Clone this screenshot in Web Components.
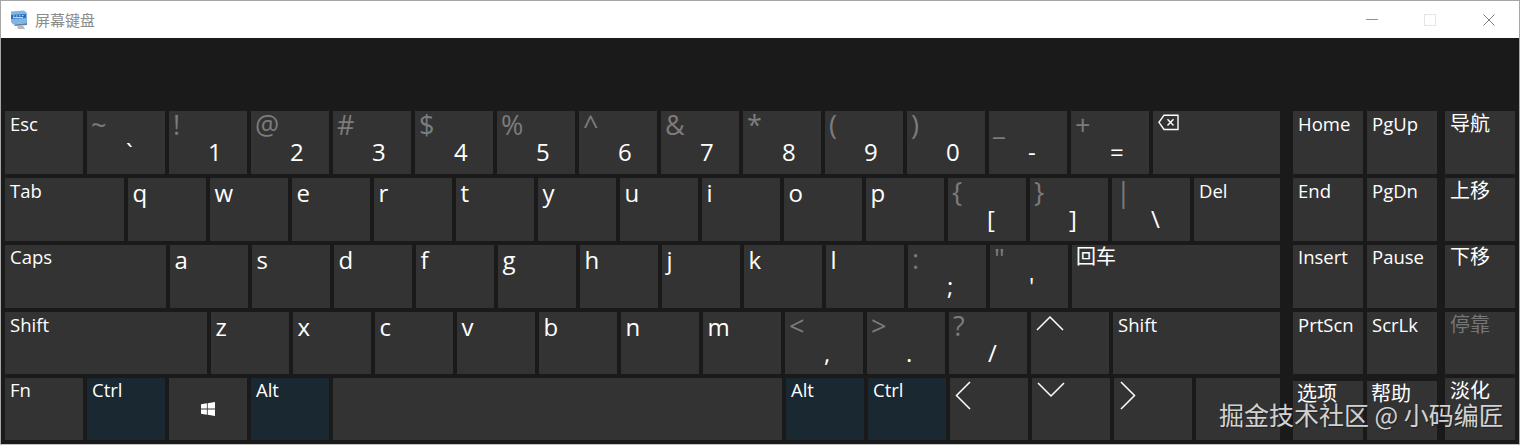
<!DOCTYPE html>
<html lang="zh">
<head>
<meta charset="utf-8">
<title>屏幕键盘</title>
<style>
html,body{margin:0;background:#1a1a1a;}
</style>
</head>
<body>

<osk-app>
  <osk-titlebar slot="title">屏幕键盘</osk-titlebar>

  <osk-block slot="main">
    <osk-row>
      <osk-key>Esc</osk-key>
      <osk-key pair><span slot="sub">~</span>`</osk-key>
      <osk-key pair><span slot="sub">!</span>1</osk-key>
      <osk-key pair><span slot="sub">@</span>2</osk-key>
      <osk-key pair><span slot="sub">#</span>3</osk-key>
      <osk-key pair><span slot="sub">$</span>4</osk-key>
      <osk-key pair><span slot="sub">%</span>5</osk-key>
      <osk-key pair><span slot="sub">^</span>6</osk-key>
      <osk-key pair><span slot="sub">&amp;</span>7</osk-key>
      <osk-key pair><span slot="sub">*</span>8</osk-key>
      <osk-key pair><span slot="sub">(</span>9</osk-key>
      <osk-key pair><span slot="sub">)</span>0</osk-key>
      <osk-key pair><span slot="sub">_</span>-</osk-key>
      <osk-key pair><span slot="sub">+</span>=</osk-key>
      <osk-key style="--w:127px">
        <svg width="21" height="17" viewBox="0 0 21 17" style="margin-top:2px" fill="none" stroke="#fff" stroke-width="1.4"><path d="M6 1.2H20V15.5H6L1 8.3Z"/><path d="M9.5 5.2l6 6.2M15.5 5.2l-6 6.2"/></svg>
      </osk-key>
    </osk-row>
    <osk-row>
      <osk-key style="--w:119px">Tab</osk-key>
      <osk-key letter>q</osk-key>
      <osk-key letter>w</osk-key>
      <osk-key letter>e</osk-key>
      <osk-key letter>r</osk-key>
      <osk-key letter>t</osk-key>
      <osk-key letter>y</osk-key>
      <osk-key letter>u</osk-key>
      <osk-key letter>i</osk-key>
      <osk-key letter>o</osk-key>
      <osk-key letter>p</osk-key>
      <osk-key pair><span slot="sub">{</span>[</osk-key>
      <osk-key pair><span slot="sub">}</span>]</osk-key>
      <osk-key pair><span slot="sub">|</span>\</osk-key>
      <osk-key style="--w:86px">Del</osk-key>
    </osk-row>
    <osk-row style="--pt:0px">
      <osk-key style="--w:161px">Caps</osk-key>
      <osk-key letter>a</osk-key>
      <osk-key letter>s</osk-key>
      <osk-key letter>d</osk-key>
      <osk-key letter>f</osk-key>
      <osk-key letter>g</osk-key>
      <osk-key letter>h</osk-key>
      <osk-key letter>j</osk-key>
      <osk-key letter>k</osk-key>
      <osk-key letter>l</osk-key>
      <osk-key pair><span slot="sub">:</span>;</osk-key>
      <osk-key pair><span slot="sub">"</span>'</osk-key>
      <osk-key cjk style="--w:208px">回车</osk-key>
    </osk-row>
    <osk-row>
      <osk-key style="--w:202px">Shift</osk-key>
      <osk-key letter>z</osk-key>
      <osk-key letter>x</osk-key>
      <osk-key letter>c</osk-key>
      <osk-key letter>v</osk-key>
      <osk-key letter>b</osk-key>
      <osk-key letter>n</osk-key>
      <osk-key letter>m</osk-key>
      <osk-key pair><span slot="sub">&lt;</span>,</osk-key>
      <osk-key pair><span slot="sub">&gt;</span>.</osk-key>
      <osk-key pair><span slot="sub">?</span>/</osk-key>
      <osk-key>
        <svg width="28" height="16" viewBox="0 0 28 16" style="margin-top:2px" fill="none" stroke="#fff" stroke-width="1.5"><path d="M1 15L14 2L27 15"/></svg>
      </osk-key>
      <osk-key style="--w:167px">Shift</osk-key>
    </osk-row>
    <osk-row style="--pt:0px">
      <osk-key>Fn</osk-key>
      <osk-key tint>Ctrl</osk-key>
      <osk-key center>
        <svg width="14" height="14" viewBox="0 0 14 14" fill="#fff"><path d="M0 2.2L5.9 1.3V6.6H0ZM6.7 1.2L14 0V6.6H6.7ZM0 7.4H5.9V12.7L0 11.8ZM6.7 7.4H14V14L6.7 12.8Z"/></svg>
      </osk-key>
      <osk-key tint>Alt</osk-key>
      <osk-key style="--w:449px"></osk-key>
      <osk-key tint>Alt</osk-key>
      <osk-key tint>Ctrl</osk-key>
      <osk-key>
        <svg width="16" height="29" viewBox="0 0 16 29" style="margin-top:3px" fill="none" stroke="#fff" stroke-width="1.5"><path d="M15 1L1.5 14.5L15 28"/></svg>
      </osk-key>
      <osk-key>
        <svg width="28" height="16" viewBox="0 0 28 16" style="margin-top:4px" fill="none" stroke="#fff" stroke-width="1.5"><path d="M1 1L14 14L27 1"/></svg>
      </osk-key>
      <osk-key>
        <svg width="16" height="29" viewBox="0 0 16 29" style="margin:3px 0 0 1px" fill="none" stroke="#fff" stroke-width="1.5"><path d="M1 1L14.5 14.5L1 28"/></svg>
      </osk-key>
      <osk-key style="--w:84px"></osk-key>
    </osk-row>
  </osk-block>

  <osk-block slot="side">
    <osk-row>
      <osk-key style="--w:70px">Home</osk-key>
      <osk-key style="--w:70px">PgUp</osk-key>
      <osk-key nav cjk style="--w:70px">导航</osk-key>
    </osk-row>
    <osk-row>
      <osk-key style="--w:70px">End</osk-key>
      <osk-key style="--w:70px">PgDn</osk-key>
      <osk-key nav cjk style="--w:70px">上移</osk-key>
    </osk-row>
    <osk-row style="--pt:0px">
      <osk-key style="--w:70px">Insert</osk-key>
      <osk-key style="--w:70px">Pause</osk-key>
      <osk-key nav cjk style="--w:70px">下移</osk-key>
    </osk-row>
    <osk-row>
      <osk-key style="--w:70px">PrtScn</osk-key>
      <osk-key style="--w:70px">ScrLk</osk-key>
      <osk-key nav cjk off style="--w:70px">停靠</osk-key>
    </osk-row>
    <osk-row>
      <osk-key short cjk style="--w:70px">选项</osk-key>
      <osk-key short cjk style="--w:70px">帮助</osk-key>
      <osk-key nav cjk style="--w:70px">淡化</osk-key>
    </osk-row>
  </osk-block>

  <osk-watermark slot="over">掘金技术社区 @ 小码编匠</osk-watermark>
</osk-app>

<script>
const FONT = `"Open Sans","Noto Sans CJK SC",sans-serif`;

// outer window: title strip, dark panel, watermark on top
class OskApp extends HTMLElement{
  constructor(){
    super();
    this.attachShadow({mode:'open'}).innerHTML = `
    <style>
      :host{
        display:flex;
        flex-direction:column;
        position:relative;
        box-sizing:border-box;
        width:1520px;
        height:445px;
        overflow:hidden;
        border:1px solid #a6a6a6;
        border-bottom-color:#c4c4c4;
        font-family:${FONT};
      }
      .panel{
        flex:1;
        display:flex;
        gap:13px;
        background:#1a1a1a;
        padding:73px 0 0 4px;
      }
    </style>
    <slot name="title"></slot>
    <div class="panel">
      <slot name="main"></slot>
      <slot name="side"></slot>
    </div>
    <slot name="over"></slot>`;
  }
}

class OskTitlebar extends HTMLElement{
  constructor(){
    super();
    this.attachShadow({mode:'open'}).innerHTML = `
    <style>
      :host{
        display:flex;
        align-items:center;
        height:37px;
        background:#fff;
        color:#8c8c8c;
        font-size:15px;
        font-family:"Noto Sans CJK SC",sans-serif;
      }
      .logo{margin:0 6px 0 9px;}
      .text{flex:1;}
      .btns{display:flex;align-items:center;gap:46px;padding-right:24px;}
      .btns svg{display:block;}
      .btns svg:last-child{margin-left:1px;}
    </style>
    <svg class="logo" width="19" height="20" viewBox="0 0 19 20">
      <path d="M1 1.5L14 .5L17 3V13L3 14.5L1 12Z" fill="#7fb4e6"/>
      <path d="M1 5L16 4V8L1 9Z" fill="#2f6fb5"/>
      <path d="M3 6h1.5M6 6h1.5M9 5.8h1.5M12 5.6h1.5M3 7.6h10" stroke="#bfe0ff" stroke-width="1"/>
      <path d="M4 14.5L17 13V15L5 16Z" fill="#5d7fa3"/>
      <path d="M7 15.5h6L15 19H8Z" fill="#b5b9bd"/>
    </svg>
    <span class="text"><slot></slot></span>
    <div class="btns">
      <svg width="12" height="12" viewBox="0 0 12 12"><path d="M0 5.5H12" stroke="#8f8f8f"/></svg>
      <svg width="12" height="12" viewBox="0 0 12 12"><rect x=".5" y=".5" width="11" height="11" fill="none" stroke="#e6e6e6"/></svg>
      <svg width="12" height="12" viewBox="0 0 12 12"><path d="M.5 .5L11.5 11.5M11.5 .5L.5 11.5" stroke="#808080"/></svg>
    </div>`;
  }
}

// column of key rows
class OskBlock extends HTMLElement{
  constructor(){
    super();
    this.attachShadow({mode:'open'}).innerHTML = `
    <style>
      :host{
        display:grid;
        grid-template-rows:63px 63px 63px 62px 62px;
        row-gap:4px;
        align-content:start;
      }
    </style>
    <slot></slot>`;
  }
}

class OskRow extends HTMLElement{
  constructor(){
    super();
    this.attachShadow({mode:'open'}).innerHTML = `
    <style>
      :host{display:flex;gap:4px;}
    </style>
    <slot></slot>`;
  }
}

const keyTemplate = document.createElement('template');
keyTemplate.innerHTML = `
<style>
  :host{
    display:flex;
    flex-direction:column;
    box-sizing:border-box;
    width:var(--w,78px);
    padding:var(--pt,1px) 0 0 5px;
    background:#333;
    color:#fff;
    font-size:18.5px;
    line-height:24px;
  }
  :host([tint]){background:#1a2831;}
  :host([letter]){font-size:24px;line-height:30px;padding:0 0 0 4.5px;}
  :host([cjk]){font-size:20px;padding-left:4px;}
  :host([off]){color:#767676;}
  :host([nav]){margin-left:4px;padding-left:5px;}
  :host([short]){margin-top:3px;padding-top:1px;}
  :host([center]){align-items:center;justify-content:center;padding:0;}
  :host([pair]){font-size:24px;line-height:26px;padding:1px 0 0 4px;}
  .sub{display:none;color:#7c7c7c;font-size:27px;}
  :host([pair]) .sub{display:block;}
  :host([pair]) .main{padding:1px 0 0 35px;}
  ::slotted(svg){display:block;}
</style>
<div class="sub"><slot name="sub"></slot></div>
<div class="main"><slot></slot></div>`;

class OskKey extends HTMLElement{
  constructor(){
    super();
    this.attachShadow({mode:'open'});
    this.shadowRoot.appendChild(keyTemplate.content.cloneNode(true));
  }
}

class OskWatermark extends HTMLElement{
  constructor(){
    super();
    this.attachShadow({mode:'open'}).innerHTML = `
    <style>
      :host{
        position:absolute;
        left:1218px;
        top:396px;
        color:#d2d2d2;
        font-size:25px;
        line-height:34px;
        white-space:nowrap;
        font-family:"Noto Sans CJK SC",sans-serif;
        text-shadow:1px 1px 1px #222;
      }
    </style>
    <slot></slot>`;
  }
}

customElements.define('osk-app',OskApp);
customElements.define('osk-titlebar',OskTitlebar);
customElements.define('osk-block',OskBlock);
customElements.define('osk-row',OskRow);
customElements.define('osk-key',OskKey);
customElements.define('osk-watermark',OskWatermark);
</script>
</body>
</html>
